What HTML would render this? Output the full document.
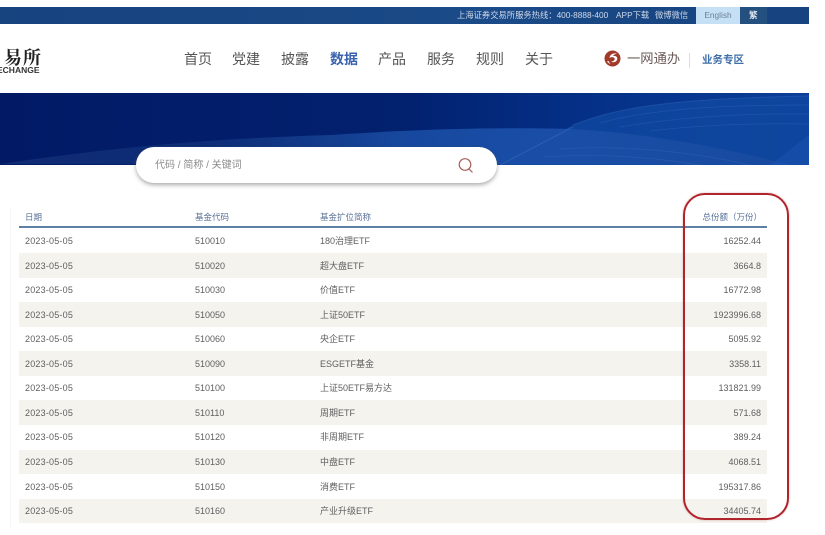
<!DOCTYPE html>
<html lang="zh">
<head>
<meta charset="utf-8">
<title>上海证券交易所</title>
<style>
html,body{margin:0;padding:0;background:#fff;}
body{width:825px;height:535px;position:relative;overflow:hidden;font-family:"Liberation Sans","Noto Sans CJK SC",sans-serif;color:#555;}
#all{position:absolute;left:0;top:0;width:825px;height:535px;filter:blur(.35px);}
.a{position:absolute;white-space:nowrap;}
#top{left:0;top:7px;width:809px;height:17px;background:linear-gradient(90deg,#17437f,#1a4a88 60%,#17437f);}
.t{font-size:8.3px;line-height:17px;top:7px;color:#cfd9e8;}
.nav{font-size:14px;line-height:20px;top:49px;color:#555;}
#banner{left:0;top:93px;width:809px;height:72px;overflow:hidden;}
#search{left:136px;top:147px;width:361px;height:36px;border-radius:18px;background:#fff;box-shadow:0 2px 4px rgba(90,90,90,.5);}
.r{left:19px;width:748px;height:24.5px;}
.s{background:#f5f3ee;}
.c{font-size:9px;line-height:12px;color:#5e5e5e;}
.d{left:25px;letter-spacing:.2px;}
.h{font-size:8.5px;line-height:12px;color:#5a7199;top:211px;}
.n{right:64px;text-align:right;}
</style>
</head>
<body>
<div id="all">
<div class="a" id="top"></div>
<div class="a t" style="left:457px;">上海证券交易所服务热线：400-8888-400</div>
<div class="a t" style="left:616px;">APP下载</div>
<div class="a t" style="left:655px;">微博微信</div>
<div class="a" style="left:696px;top:7px;width:44px;height:17px;background:#c5e0f5;color:#6d7f92;font-size:8.3px;line-height:17px;text-align:center;">English</div>
<div class="a" style="left:740px;top:7px;width:27px;height:17px;background:#23507f;color:#e2e8f0;font-size:8.5px;font-weight:bold;line-height:17px;text-indent:9px;">繁</div>

<div class="a" style="left:4px;top:44px;font-family:'Noto Serif CJK SC',serif;font-size:18px;line-height:26px;color:#222;letter-spacing:1px;font-weight:bold;">易所</div>
<div class="a" style="left:-3px;top:65px;font-size:8.5px;font-weight:bold;line-height:11px;color:#333;">ECHANGE</div>

<div class="a nav" style="left:184px;">首页</div>
<div class="a nav" style="left:232px;">党建</div>
<div class="a nav" style="left:281px;">披露</div>
<div class="a nav" style="left:330px;color:#3a62ad;font-weight:bold;">数据</div>
<div class="a nav" style="left:378px;">产品</div>
<div class="a nav" style="left:427px;">服务</div>
<div class="a nav" style="left:476px;">规则</div>
<div class="a nav" style="left:525px;">关于</div>

<svg class="a" style="left:604px;top:50px" width="17" height="17" viewBox="0 0 17 17">
<circle cx="8.500" cy="8.500" r="8" fill="#a23a2c"/>
<path d="M13 3.500C9 2.800 5.800 4.500 5.500 8c2-1.500 5-.8 5.300 1-.3 1.500-1.500 2.500-3.800 2.700 3 1.500 6.500-.5 6.300-3.200-.2-2.300-2.700-3-4.800-2.400.8-1 2.500-2 4.500-2.600z" fill="#fff"/>
<path d="M3 11c.8 1.800 2 2.800 3.800 3.200-1.200-1-1.800-2-1.900-3.200z" fill="#fff" opacity=".8"/>
</svg>
<div class="a" style="left:627px;top:49px;font-size:13.300px;line-height:20px;color:#6b5a58;">一网通办</div>
<div class="a" style="left:689px;top:53px;width:1px;height:15px;background:#ddd;"></div>
<div class="a" style="left:702px;top:52px;font-size:10.500px;line-height:16px;font-weight:bold;color:#3f6fa8;">业务专区</div>

<div class="a" id="banner">
<svg width="809" height="72" viewBox="0 0 809 72" style="display:block">
<defs>
<linearGradient id="g" x1="0" x2="1" y1="0" y2="0">
<stop offset="0" stop-color="#021a66"/>
<stop offset=".5" stop-color="#02216f"/>
<stop offset=".72" stop-color="#053087"/>
<stop offset="1" stop-color="#0b3f98"/>
</linearGradient>
<linearGradient id="h" x1="0" x2="1" y1="0" y2="0">
<stop offset="0" stop-color="#2a4a8c" stop-opacity=".35"/>
<stop offset=".25" stop-color="#1d4289" stop-opacity=".4"/>
<stop offset=".5" stop-color="#1a4ea6" stop-opacity=".85"/>
<stop offset=".7" stop-color="#1a4ea6"/>
<stop offset="1" stop-color="#174a9f"/>
</linearGradient>
</defs>
<rect width="809" height="72" fill="url(#g)"/>
<path d="M573 32C610 18 650 6 809 3V42L770 72H500z" fill="#1049a2" opacity=".75"/>
<path d="M0 71C100 56 200 46 330 42C420 36 500 34 570 36C650 40 730 56 790 72z" fill="url(#h)"/>
<path d="M500 72L573 34" stroke="#4f7cc9" stroke-width="1" opacity=".35" fill="none"/>
<path d="M573 32C610 18 650 6 809 3" fill="none" stroke="#3f70c2" stroke-width="1" opacity=".35"/>
<path d="M600 30C650 16 720 12 809 12M620 34C680 24 740 20 809 21M650 38C700 32 750 30 809 31" fill="none" stroke="#4a78c6" stroke-width=".7" opacity=".3"/>
<path d="M560 56C620 52 690 58 750 72M545 64C600 60 650 64 700 72" fill="none" stroke="#4a78c6" stroke-width=".7" opacity=".3"/>
<path d="M770 72L809 42V72z" fill="#1a56b2" opacity=".6"/>
</svg>
</div>

<div class="a" id="search"></div>
<div class="a" style="left:155px;top:159px;font-size:10px;line-height:14px;color:#8a8a8a;">代码 / 简称 / 关键词</div>
<svg class="a" style="left:457px;top:157px" width="17" height="17" viewBox="0 0 17 17" fill="none" stroke="#a5605c" stroke-width="1.200">
<circle cx="8" cy="7.500" r="5.800"/><path d="M12 12l3.500 3.500"/>
</svg>

<div class="a" style="left:10px;top:208px;width:1px;height:320px;background:#f6f6f6;"></div>
<div class="a h" style="left:25px;">日期</div>
<div class="a h" style="left:195px;">基金代码</div>
<div class="a h" style="left:320px;">基金扩位简称</div>
<div class="a h" style="right:63px;">总份额（万份）</div>
<div class="a" style="left:19px;top:226px;width:748px;height:2px;background:#5f80a6;"></div>

<div class="a r s" style="top:253px"></div>
<div class="a r s" style="top:302px"></div>
<div class="a r s" style="top:351px"></div>
<div class="a r s" style="top:400px"></div>
<div class="a r s" style="top:449.500px"></div>
<div class="a r s" style="top:498.500px"></div>

<div class="a c d" style="top:235px">2023-05-05</div><div class="a c" style="left:195px;top:235px">510010</div><div class="a c" style="left:320px;top:235px">180治理ETF</div><div class="a c n" style="top:235px">16252.44</div>
<div class="a c d" style="top:260px">2023-05-05</div><div class="a c" style="left:195px;top:260px">510020</div><div class="a c" style="left:320px;top:260px">超大盘ETF</div><div class="a c n" style="top:260px">3664.8</div>
<div class="a c d" style="top:284px">2023-05-05</div><div class="a c" style="left:195px;top:284px">510030</div><div class="a c" style="left:320px;top:284px">价值ETF</div><div class="a c n" style="top:284px">16772.98</div>
<div class="a c d" style="top:309px">2023-05-05</div><div class="a c" style="left:195px;top:309px">510050</div><div class="a c" style="left:320px;top:309px">上证50ETF</div><div class="a c n" style="top:309px">1923996.68</div>
<div class="a c d" style="top:333px">2023-05-05</div><div class="a c" style="left:195px;top:333px">510060</div><div class="a c" style="left:320px;top:333px">央企ETF</div><div class="a c n" style="top:333px">5095.92</div>
<div class="a c d" style="top:358px">2023-05-05</div><div class="a c" style="left:195px;top:358px">510090</div><div class="a c" style="left:320px;top:358px">ESGETF基金</div><div class="a c n" style="top:358px">3358.11</div>
<div class="a c d" style="top:382px">2023-05-05</div><div class="a c" style="left:195px;top:382px">510100</div><div class="a c" style="left:320px;top:382px">上证50ETF易方达</div><div class="a c n" style="top:382px">131821.99</div>
<div class="a c d" style="top:407px">2023-05-05</div><div class="a c" style="left:195px;top:407px">510110</div><div class="a c" style="left:320px;top:407px">周期ETF</div><div class="a c n" style="top:407px">571.68</div>
<div class="a c d" style="top:431px">2023-05-05</div><div class="a c" style="left:195px;top:431px">510120</div><div class="a c" style="left:320px;top:431px">非周期ETF</div><div class="a c n" style="top:431px">389.24</div>
<div class="a c d" style="top:456px">2023-05-05</div><div class="a c" style="left:195px;top:456px">510130</div><div class="a c" style="left:320px;top:456px">中盘ETF</div><div class="a c n" style="top:456px">4068.51</div>
<div class="a c d" style="top:481px">2023-05-05</div><div class="a c" style="left:195px;top:481px">510150</div><div class="a c" style="left:320px;top:481px">消费ETF</div><div class="a c n" style="top:481px">195317.86</div>
<div class="a c d" style="top:505px">2023-05-05</div><div class="a c" style="left:195px;top:505px">510160</div><div class="a c" style="left:320px;top:505px">产业升级ETF</div><div class="a c n" style="top:505px">34405.74</div>

<div class="a" style="left:683px;top:193px;width:102px;height:323px;border:2px solid #b0242c;border-radius:22px;box-shadow:0 0 2px rgba(176,36,44,.35);"></div>
</div>
</body>
</html>
